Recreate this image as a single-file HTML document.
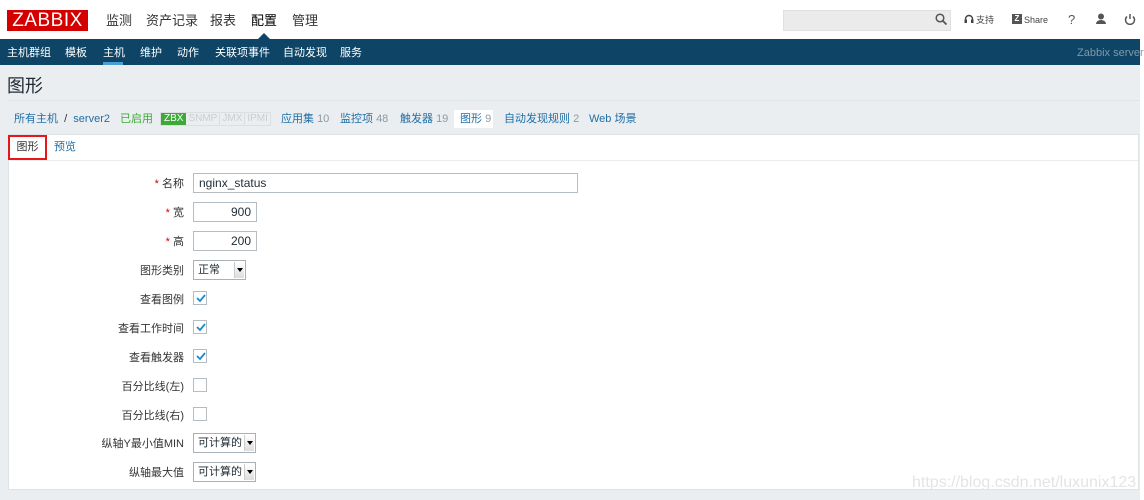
<!DOCTYPE html>
<html><head><meta charset="utf-8"><style>
*{margin:0;padding:0;box-sizing:border-box}
body{width:1144px;height:500px;overflow:hidden;background:#fff;font-family:"Liberation Sans","Noto Sans CJK SC",sans-serif;font-size:12px;color:#1f2c33;position:relative;line-height:1.2}
.a{position:absolute;white-space:nowrap}
.top{position:absolute;left:0;top:0;width:1144px;height:39px;background:#fff}
.logo{left:7px;top:10px;width:81px;height:21px;background:#d40000;color:#fff;font-size:19px;line-height:21px;text-align:center;letter-spacing:0.5px}
.mm{top:13px;font-size:13px;color:#333}
.nav{position:absolute;left:0;top:39px;width:1140px;height:26px;background:#0e4466}
.nav span{position:absolute;top:8px;color:#fff;font-size:11px;white-space:nowrap}
.gray{position:absolute;left:0;top:65px;width:1140px;height:435px;background:#ebeef0}
.crumb{color:#1f6fa8;font-size:11px;top:113px}
.n{color:#8c9aa3}
.box{position:absolute;left:8px;top:134px;width:1131px;height:356px;background:#fff;border:1px solid #dde2e5}
.lbl{font-size:11px;color:#333;text-align:right;width:180px;left:4px}
.req{color:#d40000}
.inp{position:absolute;border:1px solid #b5bdc2;background:#fff;height:20px;font-size:12px;line-height:18px;padding:0 5px}
.cb{position:absolute;left:193px;width:14px;height:14px;border:1px solid #b5bdc2;background:#fff}
.sel{position:absolute;left:193px;height:20px;border:1px solid #a9b1b6;font-size:11px;line-height:18px;padding-left:4px;background:#fff}
.sel i{position:absolute;right:1px;top:1px;width:10px;height:16px;background:linear-gradient(#fff,#ddd);border-left:1px solid #ccc}
.sel i:after{content:"";position:absolute;left:2px;top:6px;border:3px solid transparent;border-top:4px solid #000}
</style></head><body>
<div class="top"></div>
<div class="a logo">ZABBIX</div>
<div class="a mm" style="left:106px">监测</div>
<div class="a mm" style="left:146px">资产记录</div>
<div class="a mm" style="left:210px">报表</div>
<div class="a mm" style="left:251px;color:#000">配置</div>
<div class="a mm" style="left:292px">管理</div>
<div class="a" style="left:258px;top:33px;border:6px solid transparent;border-bottom-color:#0e4466;border-top:0"></div>
<div class="a" style="left:783px;top:10px;width:168px;height:21px;background:#ebebeb;border:1px solid #e0e0e0"></div>
<svg class="a" style="left:935px;top:13px" width="12" height="12"><circle cx="5" cy="5" r="3.8" fill="none" stroke="#555" stroke-width="1.5"/><path d="M8 8l3.5 3.5" stroke="#555" stroke-width="1.8"/></svg>
<svg class="a" style="left:964px;top:14px" width="10" height="10"><path d="M1.5 7V5a3.5 3.5 0 017 0v2" fill="none" stroke="#444" stroke-width="1.4"/><rect x="0.5" y="5.5" width="2.5" height="3.5" fill="#444"/><rect x="7" y="5.5" width="2.5" height="3.5" fill="#444"/></svg>
<div class="a" style="left:976px;top:15px;font-size:9px;color:#444">支持</div>
<div class="a" style="left:1012px;top:14px;width:10px;height:10px;background:#555;color:#fff;font-size:8px;line-height:10px;text-align:center;font-weight:bold">Z</div>
<div class="a" style="left:1024px;top:15px;font-size:9px;color:#444">Share</div>
<div class="a" style="left:1068px;top:12px;font-size:13px;color:#555">?</div>
<svg class="a" style="left:1095px;top:13px" width="12" height="12"><circle cx="6" cy="3.5" r="3" fill="#555"/><path d="M1 11a5 4 0 0110 0z" fill="#555"/></svg>
<svg class="a" style="left:1124px;top:13px" width="12" height="12"><path d="M3 3.5a4.5 4.5 0 106 0" fill="none" stroke="#555" stroke-width="1.5"/><path d="M6 1v5" stroke="#555" stroke-width="1.5"/></svg>
<div class="nav">
<span style="left:7px">主机群组</span><span style="left:65px">模板</span><span style="left:103px">主机</span><span style="left:140px">维护</span><span style="left:177px">动作</span><span style="left:215px">关联项事件</span><span style="left:283px">自动发现</span><span style="left:340px">服务</span>
<span style="left:1077px;color:#7f99ab">Zabbix server</span>
<div style="position:absolute;left:103px;top:23px;width:20px;height:3px;background:#4a9ed6"></div>
</div>
<div class="gray"></div>
<div class="a" style="left:7px;top:76px;font-size:18px;color:#1f2c33">图形</div>
<div class="a" style="left:7px;top:100px;width:1133px;height:1px;background:#dfe4e7"></div>
<div class="a crumb" style="left:14px">所有主机 <span style="color:#333">&nbsp;/&nbsp;</span> server2</div>
<div class="a crumb" style="left:120px;color:#3daa38">已启用</div>
<div class="a" style="left:160px;top:112px;height:14px;font-size:10px;line-height:12px;display:flex;border:1px solid #dcdfe1">
<span style="background:#3daa38;color:#fff;padding:0 3px">ZBX</span><span style="color:#ccc;padding:0 2px;border-right:1px solid #ddd">SNMP</span><span style="color:#ccc;padding:0 2px;border-right:1px solid #ddd">JMX</span><span style="color:#ccc;padding:0 2px">IPMI</span></div>
<div class="a crumb" style="left:281px">应用集 <span class="n">10</span></div>
<div class="a crumb" style="left:340px">监控项 <span class="n">48</span></div>
<div class="a crumb" style="left:400px">触发器 <span class="n">19</span></div>
<div class="a" style="left:454px;top:110px;width:39px;height:18px;background:#fff"></div>
<div class="a crumb" style="left:460px">图形 <span class="n">9</span></div>
<div class="a crumb" style="left:504px">自动发现规则 <span class="n">2</span></div>
<div class="a crumb" style="left:589px">Web 场景</div>
<div class="box"></div>
<div class="a" style="left:9px;top:160px;width:1129px;height:1px;background:#ebeef0"></div>
<div class="a" style="left:8px;top:135px;width:39px;height:25px;border:2px solid #e8161b;font-size:11px;line-height:21px;text-align:center;color:#333">图形</div>
<div class="a" style="left:54px;top:141px;font-size:11px;color:#1f6fa8">预览</div>

<div class="a lbl" style="top:178px"><span class="req">*</span> 名称</div>
<div class="inp" style="left:193px;top:173px;width:385px">nginx_status</div>
<div class="a lbl" style="top:207px"><span class="req">*</span> 宽</div>
<div class="inp" style="left:193px;top:202px;width:64px;text-align:right">900</div>
<div class="a lbl" style="top:236px"><span class="req">*</span> 高</div>
<div class="inp" style="left:193px;top:231px;width:64px;text-align:right">200</div>
<div class="a lbl" style="top:265px">图形类别</div>
<div class="sel" style="top:260px;width:53px">正常<i></i></div>
<div class="a lbl" style="top:294px">查看图例</div>
<div class="cb" style="top:291px"></div>
<div class="a lbl" style="top:323px">查看工作时间</div>
<div class="cb" style="top:320px"></div>
<div class="a lbl" style="top:352px">查看触发器</div>
<div class="cb" style="top:349px"></div>
<svg class="a" style="left:195px;top:293px" width="11" height="70"><g fill="none" stroke="#1f8ad0" stroke-width="1.8"><path d="M2 5l3 3 5-6"/><path d="M2 34l3 3 5-6"/><path d="M2 63l3 3 5-6"/></g></svg>
<div class="a lbl" style="top:381px">百分比线(左)</div>
<div class="cb" style="top:378px"></div>
<div class="a lbl" style="top:410px">百分比线(右)</div>
<div class="cb" style="top:407px"></div>
<div class="a lbl" style="top:438px">纵轴Y最小值MIN</div>
<div class="sel" style="top:433px;width:63px">可计算的<i></i></div>
<div class="a lbl" style="top:467px">纵轴最大值</div>
<div class="sel" style="top:462px;width:63px">可计算的<i></i></div>
<div class="a" style="left:912px;top:473px;font-size:16px;color:#e4e4e4">https://blog.csdn.net/luxunix123</div>
</body></html>
